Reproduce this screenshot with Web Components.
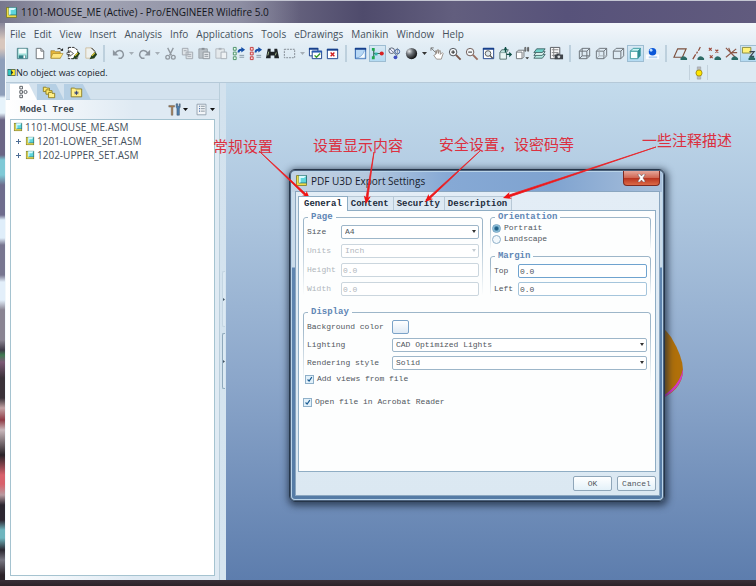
<!DOCTYPE html>
<html lang="en">
<head>
<meta charset="utf-8">
<meta name="viewport" content="width=device-width, initial-scale=1">
<title>1101-MOUSE_ME (Active) - Pro/ENGINEER Wildfire 5.0</title>
<style>
  html, body { margin: 0; }
  body {
    --ui: "Open Sans", "Noto Sans", "Noto Sans CJK SC", sans-serif;
    --mono: "Liberation Mono", "Noto Sans CJK SC", monospace;
    font: 10px/14px var(--ui);
    color: #45505c;
    overflow: hidden;
  }
</style>
</head>
<body>
<app-window caption="1101-MOUSE_ME (Active) - Pro/ENGINEER Wildfire 5.0">
  <menu-bar slot="menu" items="File,Edit,View,Insert,Analysis,Info,Applications,Tools,eDrawings,Manikin,Window,Help"></menu-bar>
  <tool-bar slot="tools"></tool-bar>
  <status-line slot="status">No object was copied.</status-line>
  <model-tree slot="side" heading="Model Tree"></model-tree>
  <graphics-area>
    <export-dialog caption="PDF U3D Export Settings">
      <x-columns>
        <x-group legend="Page">
          <x-field label="Size" kind="select" value="A4" col="34"></x-field>
          <x-field label="Units" kind="select" value="Inch" col="34" disabled></x-field>
          <x-field label="Height" kind="text" value="0.0" col="34" disabled></x-field>
          <x-field label="Width" kind="text" value="0.0" col="34" disabled></x-field>
        </x-group>
        <x-stack>
          <x-group legend="Orientation" dense>
            <x-choice kind="radio" label="Portrait" checked></x-choice>
            <x-choice kind="radio" label="Landscape"></x-choice>
          </x-group>
          <x-group legend="Margin">
            <x-field label="Top" kind="text" value="0.0" col="24" active></x-field>
            <x-field label="Left" kind="text" value="0.0" col="24"></x-field>
          </x-group>
        </x-stack>
      </x-columns>
      <x-group legend="Display">
        <x-field label="Background color" kind="swatch" col="85"></x-field>
        <x-field label="Lighting" kind="select" value="CAD Optimized Lights" col="85"></x-field>
        <x-field label="Rendering style" kind="select" value="Solid" col="85"></x-field>
        <x-choice kind="checkbox" label="Add views from file" checked></x-choice>
      </x-group>
      <x-choice class="last" kind="checkbox" label="Open file in Acrobat Reader" checked></x-choice>
    </export-dialog>
  </graphics-area>
  <note-layer slot="notes"></note-layer>
</app-window>

<script>
const PART = '<rect x="2" y="2" width="12" height="12" fill="#f6e04a" stroke="#7a7a20"/><rect x="5" y="2" width="9" height="9" fill="#5fd6dc" stroke="#1f6f80"/><path d="M5 2h9l-3 3H7v5l-2 1z" fill="#d6fbff"/>';
const CUBE = (extra = '') => `<path d="M2.500 5.500h8v8h-8zM2.500 5.500l3-3h8v8l-3 3M10.500 5.500l3-3" fill="none" stroke="#6a7076" stroke-width="1"/>${extra}`;
const EYE = '<path d="M8 13q3-4 7 0v2H8z" fill="#2c6b66"/>';
const ICONS = {
  part: PART,
  save: '<path d="M2.500 2.500h11v11h-11z" fill="#9fe0d9" stroke="#4b7d86"/><path d="M4 3h8v5H4z" fill="#f2fbfb"/><path d="M4 10h8v3H4z" fill="#2f7f84"/><path d="M9 10h2v3H9z" fill="#fff"/>',
  blank: '<path d="M4.500 2.500h5l3 3v8h-8z" fill="#fff" stroke="#6a6f74"/><path d="M9.500 2.500v3h3" fill="none" stroke="#6a6f74"/>',
  open: '<path d="M2 5h4l1 1h5v7H2z" fill="#e5b53a" stroke="#8f6d16" stroke-width=".6"/><path d="M4 8h11l-3 5H2z" fill="#ffe680" stroke="#9a7a1a" stroke-width=".6"/><path d="M9 3q3-2 5 2" fill="none" stroke="#222"/><path d="M12 5h3V2z" fill="#222"/>',
  pen1: '<path d="M2.500 1.500h6l4 3v9h-10z" fill="#fff" stroke="#222" stroke-dasharray="3 1"/><path d="M1 7h3V5l4 3-4 3V9H1z" fill="#fff" stroke="#333" stroke-width=".8"/><path d="M7 14l2-4 4-4 2 2-4 5z" fill="#22401c"/><path d="M9 10l3-3 1 1-3 3z" fill="#d7c22e"/>',
  pen2: '<path d="M3 2h6l3 3v8H3z" fill="#eef1ee" stroke="#c9b48c" stroke-width=".8"/><path d="M9 2l4 4" stroke="#222"/><path d="M7 14l2-4 4-4 2 3-3 4z" fill="#22401c"/><path d="M9 10l3-3 1 1-3 3z" fill="#d7c22e"/>',
  undo: '<path d="M4 8q4-5 8-2 3 4-1 7H8" fill="none" stroke="#8d969f" stroke-width="1.600"/><path d="M2 4v6h6z" fill="#8d969f"/>',
  redo: '<path d="M12 8q-4-5-8-2-3 4 1 7h3" fill="none" stroke="#8d969f" stroke-width="1.600"/><path d="M14 4v6H8z" fill="#8d969f"/>',
  cut: '<path d="M5 2l4 8M11 2L7 10" stroke="#9299a0" stroke-width="1.400"/><circle cx="5" cy="12" r="2" fill="none" stroke="#9299a0" stroke-width="1.400"/><circle cx="11" cy="12" r="2" fill="none" stroke="#9299a0" stroke-width="1.400"/>',
  copy: '<path d="M2.500 2.500h6v7h-6zM6.500 6.500h7v7h-7z" fill="#dfe4e8" stroke="#a2a9b0"/><path d="M4 5h3M8 9h4M8 11h4" stroke="#a2a9b0"/>',
  paste: '<path d="M2 3h9v10H2z" fill="#b9c0c6" stroke="#9aa1a8"/><path d="M5 2h3v2H5z" fill="#878e95"/><path d="M6.500 6.500h7v7h-7z" fill="#e5e9ec" stroke="#8f969d"/><path d="M8 9h4M8 11h4" stroke="#8f969d"/>',
  paste2: '<path d="M2 3h9v10H2z" fill="#e4e9ec" stroke="#b3bac0"/><path d="M5 2h3v2H5z" fill="#aab1b8"/><path d="M7.500 6.500h6v7h-6z" fill="#eef1f3" stroke="#a8afb6"/>',
  regen: '<path d="M2.500 1.500h3v3h-3zM2.500 6.500h3v3h-3zM2.500 11.500h3v3h-3z" fill="#e9fff0" stroke="#4c8f66"/><path d="M7 7q0-4 4-4v-2l4 3-4 3V5q-2 0-2 2z" fill="#1750a8"/><path d="M9 10h5M9 12h5" stroke="#8597a6"/>',
  regen2: '<path d="M2.500 1.500h3v3h-3zM2.500 6.500h3v3h-3zM2.500 11.500h3v3h-3z" fill="#ffd5d5" stroke="#c33a3a"/><path d="M7 7q0-4 4-4v-2l4 3-4 3V5q-2 0-2 2z" fill="#1750a8"/><path d="M9 10h5M9 12h5" stroke="#8597a6"/>',
  find: '<path d="M3 3h3v3h4V3h3l2 10h-5v-3H6v3H1z" fill="#1f2326"/><path d="M3 10l1-4M11 10l1-3" stroke="#a9c08f"/>',
  box: '<path d="M2.500 3.500h11v9h-11z" fill="none" stroke="#7f8890" stroke-dasharray="2 1"/>',
  wins: '<path d="M1.500 2.500h9v8h-9z" fill="#fff" stroke="#17408c"/><path d="M1 2h10v2H1z" fill="#17408c"/><path d="M4.500 5.500h10v8h-10z" fill="#fff" stroke="#17408c"/><path d="M4 5h11v2H4z" fill="#2a5ab0"/><path d="M7 10l2 2 4-4" fill="none" stroke="#3a9a2c" stroke-width="1.500"/>',
  winx: '<path d="M2.500 3.500h11v10h-11z" fill="#fff" stroke="#17408c"/><path d="M2 3h12v2H2z" fill="#17408c"/><path d="M6 7l4 4M10 7l-4 4" stroke="#d01f1f" stroke-width="1.500"/>',
  sheet: '<path d="M2.500 2.500h11v11h-11z" fill="#b8d8f5" stroke="#245aa8"/><path d="M2 2h12v2H2z" fill="#17408c"/><path d="M3 13q7-1 9-8l1 1v7z" fill="#f8fdff" stroke="#5f93cc" stroke-width=".6"/>',
  nodes: '<path d="M4 4v8M4 8h8" stroke="#35705a" stroke-width="1.300"/><path d="M2 2h3v3H2zM2 11h3v3H2z" fill="#1fa84e"/><path d="M5 7h3v3H5z" fill="#2fb6a8"/><circle cx="12.500" cy="8" r="2.200" fill="#d82222"/>',
  gears: '<circle cx="5" cy="5" r="3" fill="#eef" stroke="#54606e"/><circle cx="11" cy="6" r="2.500" fill="#dfe8f6" stroke="#3a5fa0"/><path d="M2 2l9 9M11 2v8" stroke="#7b8794"/><circle cx="9" cy="12" r="2" fill="#3f4fc0"/>',
  sphere: '<defs><radialGradient id="s" cx=".3" cy=".3" r=".8"><stop offset="0" stop-color="#e8eaec"/><stop offset=".4" stop-color="#6b7075"/><stop offset="1" stop-color="#050505"/></radialGradient></defs><circle cx="8" cy="8" r="6" fill="url(#s)"/>',
  hand: '<path d="M1 2l5 5M1 2h3M1 2v3" stroke="#777" fill="none"/><path d="M6 9V5h1v3l1-4h1v4l1-3h1v4l2-2 1 1-2 6H7l-3-4z" fill="#fff" stroke="#857a70" stroke-width=".8"/>',
  zin: '<circle cx="6.500" cy="6.500" r="4" fill="#f5f8fa" stroke="#444a50"/><path d="M6.500 4.500v4M4.500 6.500h4" stroke="#222"/><path d="M9.500 9.500l5 5" stroke="#7a5648" stroke-width="2"/>',
  zout: '<circle cx="6.500" cy="6.500" r="4" fill="#f5f8fa" stroke="#6a5550"/><path d="M4.500 6.500h4" stroke="#222"/><path d="M9.500 9.500l5 5" stroke="#9a6f60" stroke-width="2"/>',
  refit: '<path d="M2.500 2.500h11v11h-11z" fill="#fff" stroke="#1d3f87"/><path d="M2 2h12v2H2z" fill="#17408c"/><circle cx="7.500" cy="8" r="3" fill="#dfe9ee" stroke="#555"/><path d="M9.500 10l3 3" stroke="#555" stroke-width="1.500"/>',
  orient: '<path d="M2 7h7v7H2z" fill="#e9f6f4" stroke="#55706e"/><path d="M9 7l2-3H4L2 7" fill="#bfe3df" stroke="#55706e"/><path d="M8 1v6M9 9h5" stroke="#0d4f45" stroke-width="1.400"/><path d="M6 4l2-3 2 3zM12 6l3 3-3 3z" fill="#0d4f45"/>',
  views: '<path d="M1.500 6.500h6v7h-6zM1.500 6.500l2-2h6v7l-2 2" fill="#fff" stroke="#6e7377"/><path d="M10.500 1.500h1v4h-1zM13.500 1.500h1v4h-1z" fill="none" stroke="#555"/><path d="M11 12h4l-2 2z" fill="#333"/>',
  layers: '<path d="M2 13l3-4h9l-3 4z" fill="#b6ece4" stroke="#44686a"/><path d="M2 10l3-4h9l-3 4z" fill="#e6fbf8" stroke="#44686a"/><path d="M2 7l3-4h9l-3 4z" fill="#6fd0c8" stroke="#44686a"/>',
  cam: '<path d="M1.500 1.500h10v12h-10z" fill="#f8f8f8" stroke="#55595e"/><path d="M3 4h7M3 7h7M3 10h4M5 2v10" stroke="#888"/><path d="M6 9h9v5H6zM8 8h3v1H8z" fill="#40454a"/><circle cx="10.500" cy="11.500" r="1.500" fill="#d8dde0"/>',
  wire: CUBE('<path d="M5.500 2.500v8h8M2.500 13.500l3-3" fill="none" stroke="#6a7076"/>'),
  hidden: CUBE('<path d="M5.500 2.500v8h8M2.500 13.500l3-3" fill="none" stroke="#a9b0b5"/>'),
  nohid: CUBE(),
  shaded: '<path d="M2.500 5.500h8v8h-8z" fill="#f8ffff" stroke="#3f9a9f"/><path d="M2.500 5.500l3-3h8l-3 3z" fill="#c8f4f2" stroke="#3f9a9f"/><path d="M10.500 5.500l3-3v8l-3 3z" fill="#2f8f93"/>',
  ball: '<path d="M1 9h14v5H1z" fill="#f9fcff"/><path d="M4 11h9v2H4z" fill="#b6d2f2"/><circle cx="8" cy="6" r="4" fill="#0b57d8"/><circle cx="6.500" cy="4.500" r="1.500" fill="#b9dcff"/>',
  plane: '<path d="M1 12l4-9h9l-4 9z" fill="none" stroke="#7b4f3c" stroke-width="1.200"/>' + EYE,
  axis: '<path d="M3 14l3-5M7 8l1-2M9 5l2-4" stroke="#8c4a38" stroke-width="1.300"/>' + EYE,
  points: '<path d="M2 2l3 3M5 2L2 5M9 4l3 3M12 4L9 7M3 10l3 3M6 10l-3 3" stroke="#9c4434" stroke-width="1.200"/>' + EYE,
  csys: '<path d="M2 2l10 10M13 3L2 12M7 7h7M5 2l2 5" stroke="#8c5646" stroke-width="1.200"/>' + EYE,
  annot: '<path d="M1.500 1.500h9v6h-9z" fill="#fff27a" stroke="#8b8a3c"/><path d="M9 6h5l-4 5h4" fill="none" stroke="#3c4a52" stroke-width="1.300"/>' + EYE,
  light: '<path d="M6 1h4v14H6z" fill="#b9bcc0" stroke="#8c8f93" stroke-width=".5"/><circle cx="8" cy="8" r="3.500" fill="#ffe600" stroke="#a08a10"/>',
  flag: '<path d="M1 2h14v12H1z" fill="#1d3c38"/><path d="M2 3h5v10H2z" fill="#33c9c3"/><path d="M7 3h7v10H7l4-5z" fill="#ffe92e"/>',
  treeTab: '<path d="M5.500 1.500h3v3h-3zM5.500 6.500h3v3h-3zM5.500 11.500h3v3h-3z" fill="#fff" stroke="#4a5056"/><circle cx="12" cy="8" r="1.800" fill="none" stroke="#4a5056"/>',
  folders: '<path d="M1.500 2.500h3l1 1h3v4h-7z" fill="#ffe96b" stroke="#8a7a1d"/><path d="M4.500 5.500h3l1 1h3v4h-7z" fill="#ffe96b" stroke="#8a7a1d"/><path d="M7.500 8.500h3l1 1h3v5h-7z" fill="#fff08a" stroke="#8a7a1d"/>',
  fav: '<path d="M2.500 3.500h4l1 1h7v9h-12z" fill="#fff08a" stroke="#8a7a1d"/><path d="M8.500 6.500v5M6 9h5M7 7.500l3 3M10 7.500l-3 3" stroke="#2a3c78"/>',
  tools: '<path d="M1 3h7v2H6v10H4V5H1z" fill="#a8794a" stroke="#67655f" stroke-width=".6"/><path d="M10 1v4l1 2v8h3V7l1-2V1h-1v3h-2V1z" fill="#4d7fb0" stroke="#3b4d60" stroke-width=".6"/>',
  list: '<path d="M2.500 1.500h11v13h-11z" fill="#f2f5f8" stroke="#8997a5"/><path d="M5 4h1M5 7h1M5 10h1" stroke="#2c5aa0" stroke-width="1.500"/><path d="M7 4h5M7 7h5M7 10h5" stroke="#74818d"/>'
};
const icon = (name, size = 15) => `<svg viewBox="0 0 16 16" width="${size}" height="${size}" aria-hidden="true">${ICONS[name]}</svg>`;

function define(name, css, body) {
  customElements.define(name, class extends HTMLElement {
    connectedCallback() {
      if (this.shadowRoot) return;
      const root = this.attachShadow({ mode: 'open' });
      const t = document.createElement('template');
      t.innerHTML = `<style>*{box-sizing:border-box}svg{display:block;flex:none}button{font:inherit;color:inherit;margin:0}${css}</style>${typeof body === 'function' ? body(this) : body}`;
      root.append(t.content.cloneNode(true));
    }
  });
}

define('app-window', `
  :host { display: flex; flex-direction: column; min-height: 100vh; position: relative; box-sizing: border-box; overflow: hidden;
    padding: 0 0 6px 5px;
    background:
      linear-gradient(#3a2f38, #2c2228) bottom / 100% 6px no-repeat,
      linear-gradient(#8b8a9c 0 24px, #d8c7bd 40px 48px, #8e9fba 60px 95px, #e6f3fb 98px 113px, #6b6685 120px 155px, #7fc9d6 160px 175px, #6f6c8d 185px 215px, #dfeefa 220px 238px, #777690 245px 275px, #e3effa 282px 300px, #8a8492 310px 340px, #3f3a48 350px, #3f7a50 355px, #7d5a76 362px, #3a3138 378px 398px, #c4a3a5 408px, #8f3a45 420px, #c9b7bb 430px, #2a2228 455px, #d8616c 475px 484px, #b89aa0 495px, #2c2630 505px 520px, #6fb5be 530px 538px, #2b2730 550px, #777580 560px, #2b2228 575px) left / 5px 100% no-repeat,
      #4d4666; }
  header { display: flex; align-items: center; gap: 3px; height: 23px; margin-left: -5px; padding-left: 5px; color: #14161c;
    border-top: 1px solid #c4c6d2;
    background: linear-gradient(90deg, #c3c8d300, #b9bdc9aa 80px, #a9adbd88 240px, #77728a00 300px), linear-gradient(90deg, #77778c, #6d6a84 35%, #4f4b6c 48%, #625e7e 60%, #57527a 75%, #615b7e); }
  .inner { flex: 1; display: flex; flex-direction: column; background: #dceaf3; border-left: 1px solid #f2f8fb; }
  .top { background: linear-gradient(#f3f7fb, #e2edf5 22px, #dceaf3 38px); border-bottom: 1px solid #b5c9d8; }
  .main { flex: 1; display: flex; }
`, el => `<header>${icon('part', 13)}<span>${el.getAttribute('caption')}</span></header>
  <div class="inner"><div class="top"><slot name="menu"></slot><slot name="tools"></slot><slot name="status"></slot></div>
  <div class="main"><slot name="side"></slot><slot></slot></div></div><slot name="notes"></slot>`);

define('menu-bar', `
  :host { display: block; }
  nav { display: flex; gap: 8px; padding: 4px 4px 2px; height: 21px; }
  button { border: 0; padding: 0; background: none; line-height: 15px; }
`, el => `<nav>${el.getAttribute('items').split(',').map(s => `<button type="button">${s}</button>`).join('')}</nav>`);

define('tool-bar', `
  :host { display: block; }
  div { display: flex; align-items: center; height: 19px; padding-left: 8px; }
  button { flex: none; width: 17px; height: 17px; padding: 0; border: 1px solid transparent; background: none; display: grid; place-items: center; }
  button.on { border: 1px solid #9dbdd2; background: linear-gradient(#d8e8f3, #b3dbf3); }
  button.drop { width: 9px; }
  i { flex: none; width: 2px; height: 17px; margin: 0 5px 0 4px; background: #bdd0dd; }
`, () => {
  const seq = 'save blank open pen1 pen2 | undo -Undo_list redo -Redo_list cut copy paste paste2 regen regen2 find box -Select wins winx | sheet *nodes gears sphere +Shading hand zin zout refit orient views layers cam | wire hidden nohid *shaded ball | plane axis points csys *annot';
  return '<div role="toolbar">' + seq.split(' ').map(k => {
    if (k === '|') return '<i></i>';
    if (k[0] === '-' || k[0] === '+') return `<button type="button" class="drop" aria-label="${k.slice(1)}"><svg width="5" height="3" viewBox="0 0 5 3"><path d="M0 0h5L2.500 3z" fill="${k[0] === '+' ? '#333' : '#a6afb7'}"/></svg></button>`;
    const on = k[0] === '*', n = on ? k.slice(1) : k;
    return `<button type="button" aria-label="${n}"${on ? ' class="on"' : ''}>${icon(n)}</button>`;
  }).join('') + '</div>';
});

define('status-line', `
  :host { display: flex; align-items: center; height: 19px; padding-left: 1px; font-size: 9px; color: #20262c; }
  .text { flex: 1 1 682px; display: flex; align-items: center; }
  .lamp { display: grid; place-items: center; width: 19px; height: 15px; border: solid #c3d2dd; border-width: 0 1px; }
  .rest { flex: 0 0 48px; }
`, `<span class="text">${icon('flag', 9)}<slot></slot></span><span class="lamp">${icon('light', 14)}</span><span class="rest"></span>`);

define('model-tree', `
  :host { flex: 0 0 220px; display: flex; background: linear-gradient(#d3e2ee, #d6e5f0); }
  .pane { flex: 1; display: flex; flex-direction: column; padding-bottom: 4px; background: linear-gradient(90deg, #fff, #dfeaf3 60%); border-right: 1px solid #b9cedb; }
  .tabs { display: flex; height: 17px; padding: 1px 0 0 4px; background: #d3e2ee; border-bottom: 1px solid #c3d5e2; }
  .tabs button { width: 27px; height: 16px; padding: 0 0 0 5px; border: 0; background: #b5cfe4; clip-path: polygon(0 0, 70% 0, 100% 100%, 0 100%); }
  .tabs button.on { background: #fff; }
  .head { display: flex; align-items: center; gap: 7px; height: 19px; padding: 0 4px 0 14px; }
  h2 { flex: 1; margin: 0; font: bold 9px/14px var(--mono); color: #3d474f; }
  .head button { display: flex; align-items: center; gap: 2px; padding: 0; border: 0; background: none; }
  ul { flex: 1; margin: 0 4px; padding: 0 2px; list-style: none; background: #fff; border: 1px solid #a5c3d0; }
  li { display: flex; align-items: center; gap: 2px; height: 14px; line-height: 14px; }
  li.sub { padding-left: 1px; }
  .plus { width: 9px; height: 9px; padding: 0; border: 0; background: none; }
  .split { width: 6px; padding: 188px 1px 0 2px; display: flex; flex-direction: column; gap: 6px; }
  .split button { height: 56px; padding: 0; display: grid; place-items: center; border: 1px solid #c3d5e2; border-right: 0; background: #dce9f3; border-radius: 2px 0 0 2px; }
  .split button + button { border-color: #8fa9bc; }
`, el => {
  const caret = '<svg width="5" height="3" viewBox="0 0 5 3"><path d="M0 0h5L2.500 3z" fill="#111"/></svg>';
  const plus = '<button class="plus" type="button" aria-label="Expand"><svg width="9" height="9" viewBox="0 0 9 9"><path d="M2 4.500h5M4.500 2v5" stroke="#4c6c94"/></svg></button>';
  const grip = '<button type="button" aria-label="Collapse panel"><svg width="2" height="3" viewBox="0 0 2 3"><path d="M0 0l2 1.500L0 3z" fill="#456"/></svg></button>';
  return `<div class="pane"><div class="tabs" role="tablist">
    <button class="on" role="tab" aria-label="Model tree">${icon('treeTab', 14)}</button><button role="tab" aria-label="Folders">${icon('folders', 14)}</button><button role="tab" aria-label="Favourites">${icon('fav', 14)}</button></div>
    <div class="head"><h2>${el.getAttribute('heading')}</h2><button type="button" aria-label="Settings">${icon('tools', 13)}${caret}</button><button type="button" aria-label="Show">${icon('list', 13)}${caret}</button></div>
    <ul><li>${icon('part', 10)}1101-MOUSE_ME.ASM</li><li class="sub">${plus}${icon('part', 10)}1201-LOWER_SET.ASM</li><li class="sub">${plus}${icon('part', 10)}1202-UPPER_SET.ASM</li></ul></div>
    <div class="split">${grip}${grip}</div>`;
});

define('graphics-area', `
  :host { flex: 1; position: relative; display: flex; padding: 86px 91px 78px 63px; background: linear-gradient(#c3dbec, #a9c2dc 30%, #8ba6ca 60%, #5d7dad); }
  .model { position: absolute; right: 73px; top: 234px; }
  ::slotted(*) { flex: 1; position: relative; }
`, `<svg class="model" width="50" height="90" viewBox="0 0 50 90"><path d="M0 0q24 0 38 20 12 20 12 33 0 22-30 32H0z" fill="#b0700a"/><path d="M50 52q1 20-29 34h-6q30-11 35-34z" fill="#d436c8"/></svg><slot></slot>`);

define('export-dialog', `
  :host { display: flex; flex-direction: column; box-sizing: border-box; padding: 0 4px 5px 5px; font: 8px/10px var(--mono); color: #50565d;
    border: 1px solid #26364a; border-radius: 6px; box-shadow: 0 0 0 1px #4b607a inset, 0 0 0 2px #b9d3e8 inset, 1px 2px 7px 2px #1d2a3ebb;
    background: linear-gradient(90deg, #c3d3e4, #b4c8de 20%, #86a9d5 42%, #7fa3d0 70%, #a9c0db) top / 100% 22px no-repeat, linear-gradient(#cadbea 97px, #5f85b0 98px, #557ba5); }
  header { display: flex; align-items: center; gap: 3px; height: 21px; font: 10px/14px var(--ui); color: #16202c; }
  header span { flex: 1; }
  .close { align-self: flex-start; width: 37px; height: 15px; margin-top: 1px; padding: 0; display: grid; place-items: center; border: 1px solid #7e2a22; border-top: 0; border-radius: 0 0 4px 4px; background: linear-gradient(#e6a79b, #cf6450 50%, #b93420 52%, #dc6a48); }
  .client { flex: 1; display: flex; flex-direction: column; padding: 4px 3px 4px 2px; border: 1px solid #8aa6c0; background: linear-gradient(#e3edf6, #dbe8f2); }
  .tabs { display: flex; height: 14px; }
  .tabs button { padding: 1px 4px 0 3px; border: 1px solid #b7c8d6; border-width: 1px 1px 0 0; background: #dde9f3; font: bold 9px/12px var(--mono); color: #222c3c; }
  .tabs button.on { position: relative; z-index: 1; margin-bottom: -1px; padding: 0 5px; border: 1px solid #8fadc4; border-bottom: 0; background: #fff; }
  .panel { flex: 1; padding: 1px 4px; border: 1px solid #8fadc4; background: #fdfefe; }
  footer { display: flex; justify-content: flex-end; gap: 5px; padding-top: 4px; }
  footer button { width: 39px; height: 15px; padding: 0; border: 1px solid #8fa6b9; border-radius: 2px; background: linear-gradient(#fff, #e3f1f9); line-height: 12px; }
`, el => `<header>${icon('part', 13)}<span>${el.getAttribute('caption')}</span>
  <button class="close" type="button" aria-label="Close"><svg width="9" height="8" viewBox="0 0 9 8"><path d="M1 0h2l1.500 2L6 0h2v1L6 4l2 3v1H6L4.500 6 3 8H1V7l2-3-2-3z" fill="#fff" stroke="#5d4a52" stroke-width=".5"/></svg></button></header>
  <div class="client"><div class="tabs" role="tablist"><button class="on" role="tab" aria-selected="true">General</button><button role="tab">Content</button><button role="tab">Security</button><button role="tab">Description</button></div>
  <div class="panel" role="tabpanel"><slot></slot></div>
  <footer><button type="button">OK</button><button type="button">Cancel</button></footer></div>`);

define('x-columns', `:host { display: grid; grid-template-columns: 181fr 162fr; gap: 7px; margin-bottom: 11px; }`, '<slot></slot>');
define('x-stack', `:host { display: flex; flex-direction: column; justify-content: space-between; }`, '<slot></slot>');

define('x-group', `
  :host { display: block; position: relative; }
  :host::before { content: ""; position: absolute; inset: 5px 0 0; border: 1px solid #9db6c9; border-bottom: 0; border-radius: 3px; pointer-events: none; -webkit-mask: linear-gradient(#000 20%, transparent); mask: linear-gradient(#000 20%, transparent); }
  fieldset { position: relative; min-width: 0; margin: 0; padding: 0 4px; border: 0; }
  legend { margin: 0 0 2px 1px; padding: 0 3px; background: #fdfefe; font: bold 9px/11px var(--mono); color: #5f86b5; }
  .rows { display: grid; gap: 4px; }
  :host([legend="Page"]) .rows { gap: 5px; }
  :host([dense]) .rows { gap: 1px; }
  :host([dense]) legend { margin-bottom: 0; }
  :host([dense]) fieldset { padding-bottom: 6px; }
  ::slotted(x-choice) { margin-left: -2px; }
`, el => `<fieldset><legend>${el.getAttribute('legend')}</legend><div class="rows"><slot></slot></div></fieldset>`);

define('x-field', `
  :host { display: flex; align-items: center; height: 14px; }
  label { flex: 0 0 auto; white-space: nowrap; }
  .box { flex: 1; min-width: 0; display: flex; position: relative; }
  input, select { appearance: none; -webkit-appearance: none; flex: 1; min-width: 0; width: 100%; height: 14px; margin: 0; padding: 0 3px; border: 1px solid #9db6c9; border-radius: 2px; background: #fff; font: inherit; color: inherit; opacity: 1; outline: 0; }
  input { padding: 0 1px; border-color: #a5c5dc; }
  .box svg { position: absolute; right: 3px; top: 5px; }
  .swatch { width: 17px; height: 14px; padding: 0; border: 1px solid #7ba3c8; border-radius: 2px; background: linear-gradient(#fff, #dfeaf5); }
  :host([disabled]) { color: #b0b6bc; }
  :host([disabled]) input, :host([disabled]) select { border-color: #cbd6de; }
  :host([active]) input { border-color: #6fa3cf; }
`, el => {
  const k = el.getAttribute('kind'), v = el.getAttribute('value'), d = el.hasAttribute('disabled') ? ' disabled' : '';
  const lab = `<label for="c" style="flex-basis:${el.getAttribute('col')}px">${el.getAttribute('label')}</label>`;
  if (k === 'select') return `${lab}<span class="box"><select id="c"${d}><option>${v}</option></select><svg width="4" height="3" viewBox="0 0 4 3"><path d="M0 0h4L2 3z" fill="${d ? '#c4ccd2' : '#333'}"/></svg></span>`;
  if (k === 'text') return `${lab}<span class="box"><input id="c" type="text" value="${v}"${d}></span>`;
  return `${lab}<button id="c" class="swatch" type="button"></button>`;
});

define('x-choice', `
  :host { display: block; height: 10px; }
  :host(.last) { margin-top: 13px; }
  label { display: flex; align-items: center; gap: 3px; height: 10px; }
  input { appearance: none; -webkit-appearance: none; flex: none; width: 9px; height: 9px; margin: 0; border: 1px solid #8fb0c9; background: #f2f8fc; }
  input[type=radio] { border-radius: 50%; }
  input[type=radio]:checked { border-color: #7ba6c2; background: radial-gradient(circle, #1f5f86 25%, #8fc3de 60%); }
  input[type=checkbox]:checked { background: #e2f1fa url('data:image/svg+xml,<svg xmlns="http://www.w3.org/2000/svg" viewBox="0 0 9 9"><path d="M2 4.500l2 2 3.500-5" fill="none" stroke="%231b5c93" stroke-width="1.500"/></svg>') center / 100% no-repeat; }
`, el => `<label><input type="${el.getAttribute('kind')}"${el.hasAttribute('checked') ? ' checked' : ''}>${el.getAttribute('label')}</label>`);

define('note-layer', `
  :host { position: absolute; inset: 0; pointer-events: none; color: #dc3040; font: 15px/18px "Noto Sans CJK SC", sans-serif; }
  svg { position: absolute; left: 0; top: 0; }
  span { position: absolute; white-space: nowrap; }
`, () => {
  const notes = [['常规设置', 213, 137], ['设置显示内容', 313, 136], ['安全设置，设密码等', 439, 135], ['一些注释描述', 642, 131]];
  const arrows = [[259, 151, 310, 199], [374, 152, 366, 204], [480, 151, 425, 202], [656, 147, 503, 198]];
  const shapes = arrows.map(([x1, y1, x2, y2]) => {
    const l = Math.hypot(x2 - x1, y2 - y1), ux = (x2 - x1) / l, uy = (y2 - y1) / l;
    const p = (d, s) => `${(x2 - ux * d - uy * s).toFixed(1)} ${(y2 - uy * d + ux * s).toFixed(1)}`;
    return `<path d="M${x1} ${y1}L${p(5, 1)}L${p(5, -1)}z" stroke="#e8242a" stroke-width=".8"/><path d="M${x2} ${y2}L${p(8, 3.5)}L${p(6, 0)}L${p(8, -3.5)}z"/>`;
  }).join('');
  return `<svg width="756" height="586" viewBox="0 0 756 586" fill="#f21212">${shapes}</svg>` + notes.map(([t, x, y]) => `<span style="left:${x}px;top:${y}px">${t}</span>`).join('');
});
</script>
</body>
</html>
